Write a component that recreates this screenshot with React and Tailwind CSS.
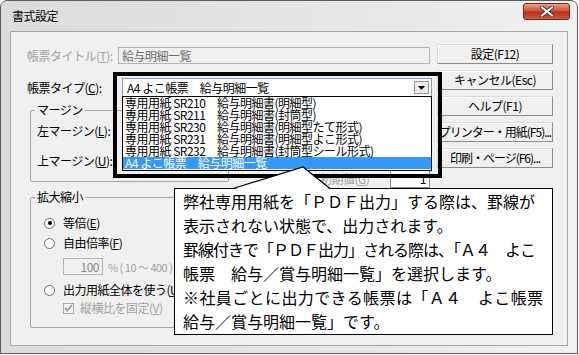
import React from 'react';

const U = ({ c }) => <span className="underline underline-offset-1">{c}</span>;

function CloseButton() {
  return (
    <div className="mt-[2px] -mr-[2px] w-[47px] h-[17px] rounded-[3px] border border-[#7a2318] bg-[linear-gradient(#e8a08c,#d2523a_45%,#b8301c_55%,#cf5a3e)] flex items-center justify-center">
      <svg width="14" height="11" viewBox="0 0 14 11">
        <path d="M2 1.5 L12 9.5 M12 1.5 L2 9.5" stroke="#3a3a3a" strokeWidth="4" strokeLinecap="square" />
        <path d="M2 1.5 L12 9.5 M12 1.5 L2 9.5" stroke="#f2f2f2" strokeWidth="2" strokeLinecap="square" />
      </svg>
    </div>
  );
}

function Button({ children, tight }) {
  return (
    <div
      className={`h-[20px] w-[116px] flex items-center justify-center whitespace-nowrap border border-t-[#dcdcdc] border-l-[#dcdcdc] border-r-[#8c8c8c] border-b-[#8c8c8c] bg-[#f0f0f0] shadow-[inset_1px_1px_0_#ffffff] ${tight ? 'tracking-[-1px]' : ''}`}
    >
      {children}
    </div>
  );
}

function Group({ label, className, children }) {
  return (
    <div className={`relative border border-[#a6a6a6] rounded-[2px] ${className}`}>
      <span className="absolute -top-[8px] left-[4px] bg-[#f0f0f0] px-[2px] leading-[14px]">{label}</span>
      {children}
    </div>
  );
}

function Radio({ checked }) {
  return (
    <div className="w-[11px] h-[11px] rounded-full border border-[#6e6e6e] bg-white flex items-center justify-center shrink-0">
      {checked && <div className="w-[4px] h-[4px] rounded-full bg-black" />}
    </div>
  );
}

const listItems = [
  '専用用紙 SR210\u3000給与明細書(明細型)',
  '専用用紙 SR211\u3000給与明細書(封筒型)',
  '専用用紙 SR230\u3000給与明細書(明細型たて形式)',
  '専用用紙 SR231\u3000給与明細書(明細型よこ形式)',
  '専用用紙 SR232\u3000給与明細書(封筒型シール形式)',
];

export default function App() {
  return (
    <div className="relative w-[579px] h-[355px] bg-white overflow-hidden font-['Noto_Sans_CJK_JP','Noto_Sans',sans-serif] text-[12px] leading-[14px] text-black tracking-[-0.5px]">
      <div className="w-[578px] h-[354px] rounded-t-[7px] border border-[#5c5c5c] bg-[linear-gradient(90deg,#dcdcdc,#e6e6e6_60%,#f2f2f2)] px-[9px] pb-[7px] flex flex-col">
        <div className="h-[30px] flex items-start justify-between shrink-0">
          <span className="mt-[8px] ml-[2px]">書式設定</span>
          <CloseButton />
        </div>

        <div className="flex-1 border border-[#a5a5a5] bg-[#f0f0f0] flex">
          {/* 左側 */}
          <div className="pl-[16px] pt-[15px] w-[419px] shrink-0">
            <div className="flex items-center h-[17px]">
              <span className="w-[91px] shrink-0 text-[#a3a3a3]">
                帳票タイトル(<U c="T" />):
              </span>
              <div className="w-[312px] h-[17px] border border-[#b5b5b5] bg-[#f0f0f0] text-[#6d6d6d] pl-[3px] flex items-center">
                給与明細一覧
              </div>
            </div>

            <div className="mt-[14px] flex items-center h-[19px]">
              <span className="w-[95px] shrink-0">
                帳票タイプ(<U c="C" />):
              </span>
              <div className="w-[310px] h-[19px] shrink-0 border border-[#7f9db9] bg-white pl-[4px] flex items-center justify-between">
                <span>A4 よこ帳票　給与明細一覧</span>
                <div className="w-[15px] h-[13px] mr-[2px] border border-[#9a9a9a] bg-[#ececec] flex items-center justify-center">
                  <svg width="7" height="4" viewBox="0 0 7 4">
                    <path d="M0 0 H7 L3.5 4 Z" fill="#000" />
                  </svg>
                </div>
              </div>
            </div>

            <div className="mt-[13px] flex items-start h-[72px]">
              <Group label="マージン" className="ml-[3px] w-[199px] h-[72px] shrink-0">
                <div className="pl-[6px] pt-[13px]">
                  <div className="h-[14px]">
                    左マージン(<U c="L" />):
                  </div>
                  <div className="h-[14px] mt-[16px]">
                    上マージン(<U c="U" />):
                  </div>
                </div>
              </Group>
              <div className="ml-[91px] mt-[60px] flex items-center h-[18px] shrink-0">
                <span className="w-[70px] text-[#a3a3a3]">
                  初期値(<U c="G" />)
                </span>
                <div className="w-[40px] h-[18px] border border-[#8a8a8a] bg-white flex items-center justify-end pr-[3px]">
                  1
                </div>
              </div>
            </div>

            <Group label="拡大縮小" className="mt-[15px] ml-[3px] w-[260px] h-[131px]">
              <div className="pl-[13px] pt-[17px]">
                <div className="h-[16px] flex items-center gap-[8px]">
                  <Radio checked />
                  <span>
                    等倍(<U c="E" />)
                  </span>
                </div>
                <div className="h-[16px] mt-[4px] flex items-center gap-[8px]">
                  <Radio />
                  <span>
                    自由倍率(<U c="F" />)
                  </span>
                </div>
                <div className="h-[17px] mt-[7px] ml-[19px] flex items-center gap-[5px] text-[#a3a3a3]">
                  <div className="w-[40px] h-[17px] border border-[#b5b5b5] bg-[#f0f0f0] text-[#8a8a8a] flex items-center justify-end pr-[3px]">
                    100
                  </div>
                  <span className="text-[11px]">% ( 10 ～ 400 )</span>
                </div>
                <div className="h-[16px] mt-[7px] flex items-center gap-[8px]">
                  <Radio />
                  <span>
                    出力用紙全体を使う(<U c="U" />)
                  </span>
                </div>
                <div className="h-[16px] mt-[2px] ml-[19px] flex items-center gap-[6px] text-[#a3a3a3]">
                  <div className="w-[11px] h-[11px] border border-[#a8a8a8] bg-[#f4f4f4] flex items-center justify-center">
                    <svg width="9" height="8" viewBox="0 0 9 8">
                      <path d="M1 4 L3.5 6.5 L8 1" stroke="#9c9c9c" strokeWidth="1.8" fill="none" />
                    </svg>
                  </div>
                  <span>
                    縦横比を固定(<U c="V" />)
                  </span>
                </div>
              </div>
            </Group>
          </div>

          {/* ボタン */}
          <div className="ml-[7px] pt-[12px] flex flex-col gap-[6px] shrink-0">
            <Button>設定(F12)</Button>
            <Button>キャンセル(Esc)</Button>
            <Button>ヘルプ(F1)</Button>
            <Button tight>プリンター・用紙(F5)...</Button>
            <Button tight>印刷・ページ(F6)...</Button>
          </div>
        </div>
      </div>

      {/* 開いたドロップダウン */}
      <div className="absolute left-[122px] top-[96px] w-[310px] h-[75px] border border-black bg-white">
        {listItems.map((t) => (
          <div key={t} className="h-[12px] leading-[12px] pl-[2px] whitespace-nowrap">
            {t}
          </div>
        ))}
        <div className="h-[12px] leading-[12px] pl-[2px] bg-[#3399ff] text-white whitespace-nowrap">
          A4 よこ帳票　給与明細一覧
        </div>
      </div>

      {/* 注目枠 */}
      <div className="absolute left-[113px] top-[72px] w-[329px] h-[106px] border-[4px] border-black" />

      {/* 吹き出し */}
      <div className="absolute left-[174px] top-[188px] w-[379px] h-[147px] border border-black bg-white pl-[8px] text-[16px] leading-[24px] tracking-normal whitespace-nowrap">
        <div>弊社専用用紙を「ＰＤＦ出力」する際は、罫線が</div>
        <div>表示されない状態で、出力されます。</div>
        <div className="tracking-[-1px]">罫線付きで「ＰＤＦ出力」される際は、「Ａ４　よこ</div>
        <div>帳票　給与／賞与明細一覧」を選択します。</div>
        <div className="tracking-[0.4px]">※社員ごとに出力できる帳票は「Ａ４　よこ帳票</div>
        <div>給与／賞与明細一覧」です。</div>
      </div>
      <svg className="absolute left-[230px] top-[165px]" width="104" height="25" viewBox="0 0 104 25">
        <polygon points="3,24.5 73,2 100,24.5" fill="#fff" />
        <polyline points="3,23.5 73,2 100,23.5" fill="none" stroke="#000" strokeWidth="1.2" />
      </svg>
    </div>
  );
}
